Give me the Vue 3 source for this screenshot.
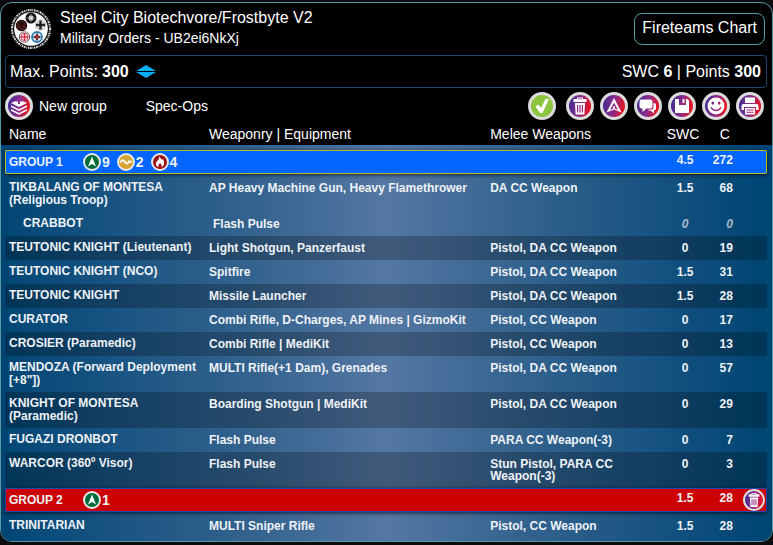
<template>
  <div class="army-list">
    <header class="list-header">
      <svg class="faction-logo" viewBox="0 0 42 42" aria-hidden="true">
        <circle cx="21" cy="21" r="20.5" fill="#111" />
        <circle cx="21" cy="21" r="19" fill="none" stroke="#ddd" stroke-width="2" stroke-dasharray="1.3 0.8 0.7 0.9 1.8 0.8" />
        <circle cx="21" cy="21" r="16.8" fill="#fff" />
        <circle cx="21" cy="10" r="5.5" fill="#161618" />
        <path d="M21 6.5v7M17.5 10h7M19 8l4 4M23 8l-4 4" stroke="#ddd" stroke-width="1.1" />
        <circle cx="11.5" cy="17.5" r="5.7" fill="#1a0a0a" />
        <circle cx="11.5" cy="17.5" r="4.8" fill="#48181b" />
        <path d="M11.5 14.5v6.5M9 15.5h5" stroke="#150909" stroke-width="1.4" />
        <circle cx="30.5" cy="17" r="5.3" fill="#ddd" stroke="#aaa" stroke-width="0.6" />
        <path d="M30.5 12.5v9M26 17h9" stroke="#222" stroke-width="2.4" />
        <circle cx="14.5" cy="29" r="5.2" fill="#fff" stroke="#555" />
        <circle cx="14.5" cy="29" r="3.6" fill="none" stroke="#e0455a" />
        <path d="M14.5 25v8M10.5 29h8" stroke="#d82c44" stroke-width="1.5" />
        <circle cx="27" cy="29" r="5" fill="#fff" stroke="#2b7fb5" stroke-width="1.8" />
        <path d="M27 25.5v7M23.5 29h7" stroke="#333" stroke-width="2.4" />
        <path d="M27 26.500v5M24.500 29h5" stroke="#d82c44" />
      </svg>
      <div class="titles">
        <h1>Steel City Biotechvore/Frostbyte V2</h1>
        <p>Military Orders - UB2ei6NkXj</p>
      </div>
      <button type="button" class="chart-btn">Fireteams Chart</button>
    </header>

    <div class="points-bar">
      <label for="max-points">Max. Points:</label>
      <input id="max-points" v-model.number="maxPoints" type="text" inputmode="numeric" />
      <span class="spinner">
        <button type="button" class="up" aria-label="More points" @click="maxPoints += 50"></button>
        <button type="button" class="down" aria-label="Fewer points" @click="maxPoints -= 50"></button>
      </span>
      <span class="totals">SWC <b>{{ maxPoints / 50 }}</b> | Points <b>{{ maxPoints }}</b></span>
    </div>

    <div class="toolbar">
      <button type="button" class="text-btn">
        <span class="round-icon">
          <svg viewBox="0 0 22 22" aria-hidden="true">
            <path d="M3 8 11 4.5 19 8 11 12zM3 10.2v1.8L11 16l8-4v-1.8L11 14.200zM3 14v1.800l8 4 8-4V14l-8 4z" fill="#fff" />
            <path d="M11 2v7M7.500 5.500h7" stroke="#8b2f9a" stroke-width="2" />
          </svg>
        </span>
        New group
      </button>
      <button type="button" class="text-btn spec-ops">Spec-Ops</button>
      <div class="actions">
        <button
          v-for="action in actions"
          :key="action.name"
          type="button"
          class="round-icon"
          :class="action.name"
          :aria-label="action.label"
        >
          <svg viewBox="0 0 22 22" aria-hidden="true">
            <path :d="icons[action.name]" fill="#fff" fill-rule="evenodd" />
          </svg>
        </button>
      </div>
    </div>

    <div class="table-wrapper">
      <table>
        <colgroup>
          <col class="col-name" />
          <col class="col-weapons" />
          <col class="col-melee" />
          <col class="col-swc" />
          <col class="col-cost" />
          <col />
        </colgroup>
        <thead>
          <tr>
            <th>Name</th>
            <th>Weaponry | Equipment</th>
            <th>Melee Weapons</th>
            <th class="swc">SWC</th>
            <th class="cost">C</th>
            <th></th>
          </tr>
        </thead>
        <tbody v-for="group in groups" :key="group.name">
          <tr class="group-row" :class="{ active: group.active }">
            <td colspan="3">
              <div class="group-title">
                <span class="group-name">{{ group.name }}</span>
                <span v-for="order in group.orders" :key="order.type" class="order">
                  <span class="order-icon" :class="order.type">
                    <svg viewBox="0 0 14 14" aria-hidden="true">
                      <path v-if="order.type === 'regular'" d="M7 1.5 11 11.5 7 9 3 11.5z" fill="#fff" />
                      <path v-else-if="order.type === 'irregular'" d="M1.500 7.500C3 4 4.500 5 6 7s3 2 4-.5l2.500.5" fill="none" stroke="#fff" stroke-width="2" />
                      <path v-else d="M6.500 1c.5 2.500 2 2.500 2.500 4l1-1c.5 2 1.500 3 1 5-.4 1.800-1.500 2.800-2.500 3.200.8-2-.5-3-1.500-4.200-.8 1.300-2.300 2.200-1.500 4.200C3.500 11.500 2.500 10 3 8c.5-2 3.500-3 3.500-7z" fill="#fff" />
                    </svg>
                  </span>
                  {{ order.count }}
                </span>
              </div>
            </td>
            <td class="swc">{{ group.swc }}</td>
            <td class="cost">{{ group.cost }}</td>
            <td class="remove">
              <button v-if="!group.active" type="button" class="round-icon small" aria-label="Delete group">
                <svg viewBox="0 0 22 22" aria-hidden="true">
                  <path :d="icons.trash" fill="#fff" fill-rule="evenodd" />
                </svg>
              </button>
            </td>
          </tr>
          <tr
            v-for="unit in group.units"
            :key="unit.name"
            :class="{ dark: unit.dark, peripheral: unit.peripheral }"
          >
            <td class="name">{{ unit.name }}</td>
            <td class="weapons">{{ unit.weapons }}</td>
            <td>{{ unit.melee }}</td>
            <td class="swc">{{ unit.swc }}</td>
            <td class="cost">{{ unit.cost }}</td>
            <td></td>
          </tr>
        </tbody>
      </table>
    </div>
  </div>
</template>

<script setup>
import { ref } from 'vue'

const maxPoints = ref(300)

const actions = [
  { name: 'check', label: 'Validate' },
  { name: 'trash', label: 'Delete list' },
  { name: 'orders', label: 'Orders' },
  { name: 'comments', label: 'Comments' },
  { name: 'save', label: 'Save' },
  { name: 'face', label: 'Profile' },
  { name: 'print', label: 'Print' }
]

const icons = {
  check: 'M4.500 11.500l3-2 2.500 3.500L14.500 4h3.500L11.500 18H9z',
  trash: 'M8 2.500h6v1.500h3.500v3h-13V4H8zM9 3.500v.8h4v-.8zM6 8h10l-.6 11.500H6.600zM8 10v7.500h1.200V10zm2.400 0v7.500h1.200V10zm2.400 0v7.500H14V10z',
  orders: 'M11 3 18.500 17.500 11 14.500 3.500 17.500zM11 7.500 7 15l3.200-1.500V11h1.600v2.500L15 15z',
  comments: 'M4.500 4.500h9a2 2 0 0 1 2 2v5a2 2 0 0 1-2 2H9.500L5.500 17v-3.500h-1a2 2 0 0 1-2-2v-5a2 2 0 0 1 2-2zM16.500 8h.5a2 2 0 0 1 2 2v3.500a2 2 0 0 1-2 2V18.500L13.500 15.500H11l1-1h2.500a2 2 0 0 0 2-2z',
  save: 'M4 4h4v6h7V4h1.500L18 5.500V18H4zM11.500 4h2v4h-2z',
  face: 'M11 2.500a8.500 8.500 0 1 1 0 17 8.500 8.500 0 0 1 0-17zM7.800 6.500a1.300 1.600 0 1 0 .01 0zM14.200 6.500a1.300 1.600 0 1 0 .01 0zM5.500 12.500c2 5 9 5 11 0l-1-.4c-2 3.400-7 3.400-9 0z',
  print: 'M6 2.500h10V8H6zM4.500 9h13a2 2 0 0 1 2 2v4H17v-3H5v3H2.500v-4a2 2 0 0 1 2-2zM6 13h10v6.500H6zM7.500 14.500v1h7v-1zm0 2.200v1h7v-1z'
}

const groups = [
  {
    name: 'GROUP 1',
    active: true,
    swc: '4.5',
    cost: 272,
    orders: [
      { type: 'regular', count: 9 },
      { type: 'irregular', count: 2 },
      { type: 'impetuous', count: 4 }
    ],
    units: [
      { name: 'TIKBALANG OF MONTESA (Religious Troop)', weapons: 'AP Heavy Machine Gun, Heavy Flamethrower', melee: 'DA CC Weapon', swc: '1.5', cost: 68 },
      { name: 'CRABBOT', weapons: 'Flash Pulse', melee: '', swc: '0', cost: 0, peripheral: true },
      { name: 'TEUTONIC KNIGHT (Lieutenant)', weapons: 'Light Shotgun, Panzerfaust', melee: 'Pistol, DA CC Weapon', swc: '0', cost: 19, dark: true },
      { name: 'TEUTONIC KNIGHT (NCO)', weapons: 'Spitfire', melee: 'Pistol, DA CC Weapon', swc: '1.5', cost: 31 },
      { name: 'TEUTONIC KNIGHT', weapons: 'Missile Launcher', melee: 'Pistol, DA CC Weapon', swc: '1.5', cost: 28, dark: true },
      { name: 'CURATOR', weapons: 'Combi Rifle, D-Charges, AP Mines | GizmoKit', melee: 'Pistol, CC Weapon', swc: '0', cost: 17 },
      { name: 'CROSIER (Paramedic)', weapons: 'Combi Rifle | MediKit', melee: 'Pistol, CC Weapon', swc: '0', cost: 13, dark: true },
      { name: 'MENDOZA (Forward Deployment [+8"])', weapons: 'MULTI Rifle(+1 Dam), Grenades', melee: 'Pistol, DA CC Weapon', swc: '0', cost: 57 },
      { name: 'KNIGHT OF MONTESA (Paramedic)', weapons: 'Boarding Shotgun | MediKit', melee: 'Pistol, DA CC Weapon', swc: '0', cost: 29, dark: true },
      { name: 'FUGAZI DRONBOT', weapons: 'Flash Pulse', melee: 'PARA CC Weapon(-3)', swc: '0', cost: 7 },
      { name: 'WARCOR (360º Visor)', weapons: 'Flash Pulse', melee: 'Stun Pistol, PARA CC Weapon(-3)', swc: '0', cost: 3, dark: true }
    ]
  },
  {
    name: 'GROUP 2',
    active: false,
    swc: '1.5',
    cost: 28,
    orders: [{ type: 'regular', count: 1 }],
    units: [
      { name: 'TRINITARIAN', weapons: 'MULTI Sniper Rifle', melee: 'Pistol, CC Weapon', swc: '1.5', cost: 28 }
    ]
  }
]
</script>

<style>
body {
  background: #0c0c0e;
}
</style>

<style scoped>
.army-list {
  box-sizing: border-box;
  margin-top: 2px;
  border: 1px solid #5a98a4;
  border-radius: 12px;
  overflow: hidden;
  background: #000;
  color: #fff;
  font-family: "Liberation Sans", Arial, sans-serif;
  font-size: 14px;
}

button {
  font: inherit;
  color: inherit;
  background: none;
  border: 0;
  padding: 0;
  cursor: pointer;
}

/* header */
.list-header {
  display: flex;
  align-items: center;
  gap: 8px;
  height: 52px;
  padding: 0 7px 0 9px;
}

.faction-logo {
  width: 42px;
  height: 42px;
}

.titles {
  flex: 1;
  padding-bottom: 3px;
}

h1,
p {
  margin: 0;
  font-weight: normal;
  line-height: 20px;
}

h1 {
  font-size: 16px;
}

.chart-btn {
  height: 32px;
  padding: 0 7px 2px;
  border: 1px solid #5a98a4;
  border-radius: 8px;
  font-size: 16px;
}

/* points */
.points-bar {
  display: flex;
  align-items: center;
  height: 33px;
  margin: 0 5px 0 4px;
  padding: 0 5px 0 4px;
  box-sizing: border-box;
  border: 1px solid #1c466c;
  border-radius: 4px;
  font-size: 16px;
}

.points-bar input {
  width: 30px;
  margin-left: 4px;
  padding: 0;
  border: 0;
  background: none;
  color: #fff;
  font: inherit;
  font-weight: bold;
}

.spinner {
  display: flex;
  flex-direction: column;
  gap: 1px;
  margin-left: 4px;
}

.spinner button {
  width: 20px;
  height: 6px;
  background: #08adf5;
}

.spinner .up {
  clip-path: polygon(50% 0, 100% 100%, 0 100%);
}

.spinner .down {
  clip-path: polygon(0 0, 100% 0, 50% 100%);
}

.totals {
  margin-left: auto;
}

/* toolbar */
.toolbar {
  display: flex;
  align-items: center;
  height: 35px;
  padding: 0 8px 0 4px;
}

.text-btn {
  display: flex;
  align-items: center;
  gap: 6px;
}

.spec-ops {
  margin-left: 39px;
}

.actions {
  display: flex;
  gap: 6px;
  margin-left: auto;
}

.round-icon {
  display: flex;
  box-sizing: border-box;
  width: 28px;
  height: 28px;
  border: 3px solid #dcdcdc;
  border-radius: 50%;
  background: linear-gradient(100deg, #3f2d8f 5%, #8e2a8c 50%, #e8141c 90%);
}

.round-icon svg {
  width: 100%;
  height: 100%;
}

.round-icon.check {
  margin-right: 4px;
  background: #8cc63f;
}

.round-icon.small {
  width: 22px;
  height: 22px;
  border-width: 2px;
}

/* table */
.table-wrapper {
  padding: 0 5px 3px 4px;
  background:
    linear-gradient(#000 0 22px, transparent 22px),
    linear-gradient(90deg, #004674 0%, #1c5583 16%, #35638f 33%, #5577a3 50%, #35638f 67%, #1c5583 82%, #004674 98%);
}

table {
  width: 100%;
  table-layout: fixed;
  border-collapse: separate;
  border-spacing: 0;
}

.col-name {
  width: 26.25%;
}

.col-weapons {
  width: 36.9%;
}

.col-melee {
  width: 23.5%;
}

.col-swc {
  width: 5.2%;
}

.col-cost {
  width: 4.2%;
}

th {
  padding: 0 4px 5px;
  font-weight: normal;
  line-height: 22px;
  text-align: left;
}

td {
  padding: 6px 4px;
  color: #eef2f6;
  font-size: 12px;
  font-weight: bold;
  line-height: 12px;
  vertical-align: top;
}

td.name {
  padding-top: 5px;
  padding-bottom: 5px;
  line-height: 13px;
}

th.swc,
td.swc {
  padding-left: 0;
  padding-right: 0;
  text-align: center;
}

.cost {
  text-align: right;
}

th.cost {
  padding-right: 7px;
}

th.swc {
  padding-right: 4px;
}

.dark td {
  background: rgba(0, 0, 0, 0.24);
}

.peripheral .name {
  padding-left: 18px;
}

.peripheral .weapons {
  padding-left: 8px;
}

.peripheral .swc,
.peripheral .cost {
  color: #a9bccd;
  font-style: italic;
}

/* group rows */
.group-row {
  box-shadow: 0 1px 4px rgba(0, 0, 0, 0.7);
}

.group-row td {
  height: 22px;
  padding-top: 0;
  padding-bottom: 0;
  border: 0 solid #2446b0;
  border-width: 1px 0;
  background: #c00;
  line-height: 18px;
}

.group-row td:first-child {
  border-left-width: 1px;
  border-radius: 2px 0 0 2px;
  padding-left: 3px;
}

.group-row td:last-child {
  border-right-width: 1px;
  border-radius: 0 2px 2px 0;
}

.group-row.active td {
  border-color: #b5bd2b;
  background: #06f;
}

.group-row + tr td {
  padding-top: 8px;
}

.group-row + tr .name {
  padding-top: 7px;
}

.group-title {
  display: flex;
  align-items: center;
  gap: 7px;
  height: 22px;
}

.group-name {
  width: 67px;
}

.order {
  display: flex;
  align-items: center;
  gap: 1px;
  font-size: 14px;
}

.order-icon {
  display: flex;
  box-sizing: border-box;
  width: 18px;
  height: 18px;
  border: 2px solid #e8e8e8;
  border-radius: 50%;
}

.order-icon svg {
  width: 100%;
  height: 100%;
}

.regular {
  background: #006a3a;
}

.irregular {
  background: #d6a431;
}

.impetuous {
  background: #9c1115;
}

.group-row .remove {
  padding: 0;
}

.remove .round-icon {
  margin: 0 1px 0 auto;
}
</style>
